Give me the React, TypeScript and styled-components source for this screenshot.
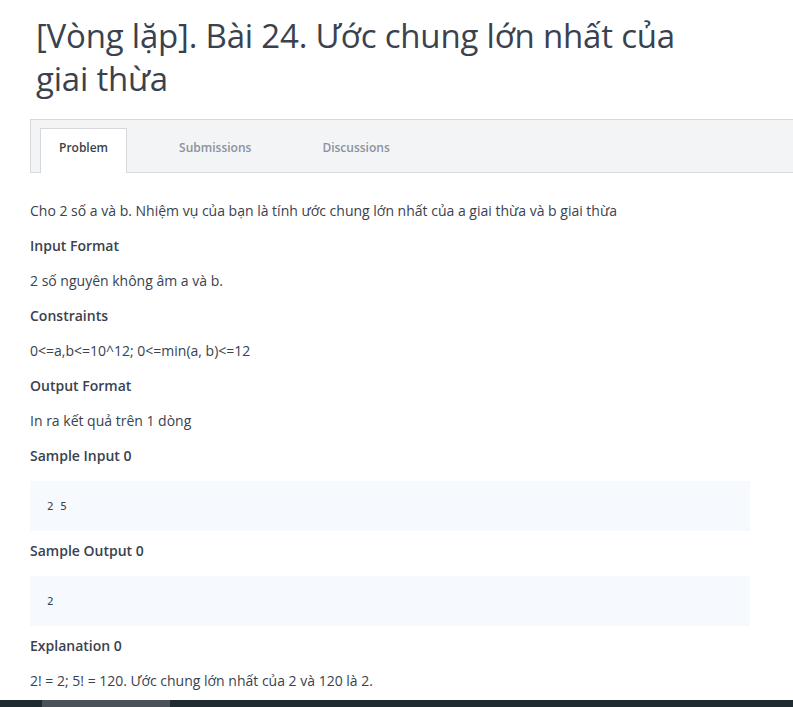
import React from 'react';
import styled, { createGlobalStyle } from 'styled-components';

const GlobalStyle = createGlobalStyle`
  html, body {
    margin: 0;
    padding: 0;
    background: #ffffff;
  }
  body {
    font-family: 'Open Sans', 'Noto Sans', sans-serif;
    color: #39424e;
  }
`;

const TABS = [
  { id: 1, label: 'Problem', active: true },
  { id: 2, label: 'Submissions', active: false },
  { id: 3, label: 'Discussions', active: false },
];

const App = () => {
  return (
    <>
      <GlobalStyle />
      <Page>
        <Title>
          [Vòng lặp]. Bài 24. Ước chung lớn nhất của
          <br />
          giai thừa
        </Title>

        <TabBar>
          {TABS.map(({ id, label, active }) => (
            <Tab key={id} $active={active}>
              {label}
            </Tab>
          ))}
        </TabBar>

        <Content>
          <Text>Cho 2 số a và b. Nhiệm vụ của bạn là tính ước chung lớn nhất của a giai thừa và b giai thừa</Text>
          <Heading>Input Format</Heading>
          <Text>2 số nguyên không âm a và b.</Text>
          <Heading>Constraints</Heading>
          <Text>0&lt;=a,b&lt;=10^12; 0&lt;=min(a, b)&lt;=12</Text>
          <Heading>Output Format</Heading>
          <Text>In ra kết quả trên 1 dòng</Text>
          <Heading>Sample Input 0</Heading>
          <CodeBox>2 5</CodeBox>
          <Heading>Sample Output 0</Heading>
          <CodeBox>2</CodeBox>
          <Heading>Explanation 0</Heading>
          <Text>2! = 2; 5! = 120. Ước chung lớn nhất của 2 và 120 là 2.</Text>
        </Content>
      </Page>
      <Taskbar>
        <TaskbarItem />
      </Taskbar>
    </>
  );
};

const Page = styled.div`
  display: flex;
  flex-direction: column;
  height: 700px;
  overflow: hidden;
  padding-left: 30px;
  box-sizing: border-box;

  & > * {
    flex-shrink: 0;
  }
`;

const Title = styled.h1`
  margin: 14px 0 0 6px;
  font-size: 33px;
  line-height: 43px;
  font-weight: 400;
  color: #39424e;
  letter-spacing: -0.2px;
`;

const TabBar = styled.div`
  display: flex;
  align-items: flex-end;
  gap: 33px;
  height: 54px;
  margin-top: 19px;
  padding-left: 9px;
  box-sizing: border-box;
  background: #f3f4f6;
  border: 1px solid #d4d7dc;
  border-right: none;
`;

const Tab = styled.div<{ $active: boolean }>`
  display: flex;
  align-items: center;
  justify-content: center;
  height: 45px;
  margin-bottom: -1px;
  padding: 0 18px 8px;
  box-sizing: border-box;
  font-size: 12px;
  font-weight: 600;
  color: ${props => (props.$active ? '#39424e' : '#8a929c')};
  background: ${props => (props.$active ? '#ffffff' : 'transparent')};
  border: 1px solid ${props => (props.$active ? '#d4d7dc' : 'transparent')};
  border-bottom: none;
`;

const Content = styled.div`
  display: flex;
  flex-direction: column;
  padding-top: 28px;
  width: 720px;
`;

const Text = styled.p`
  margin: 0 0 15px;
  font-size: 14px;
  line-height: 20px;
  color: #39424e;
`;

const Heading = styled.h4`
  margin: 0 0 15px;
  font-size: 14px;
  line-height: 20px;
  font-weight: 600;
  color: #39424e;
`;

const CodeBox = styled.pre`
  margin: 0 0 10px;
  height: 50px;
  box-sizing: border-box;
  padding: 17px 17px 15px;
  background: #f6f9fd;
  font-family: 'DejaVu Sans Mono', 'Liberation Mono', monospace;
  font-size: 11px;
  line-height: 18px;
  color: #39424e;
`;

const Taskbar = styled.div`
  display: flex;
  height: 7px;
  background: #1f2b30;
  padding-left: 42px;
`;

const TaskbarItem = styled.div`
  width: 128px;
  background: #4a5257;
`;

export default App;
